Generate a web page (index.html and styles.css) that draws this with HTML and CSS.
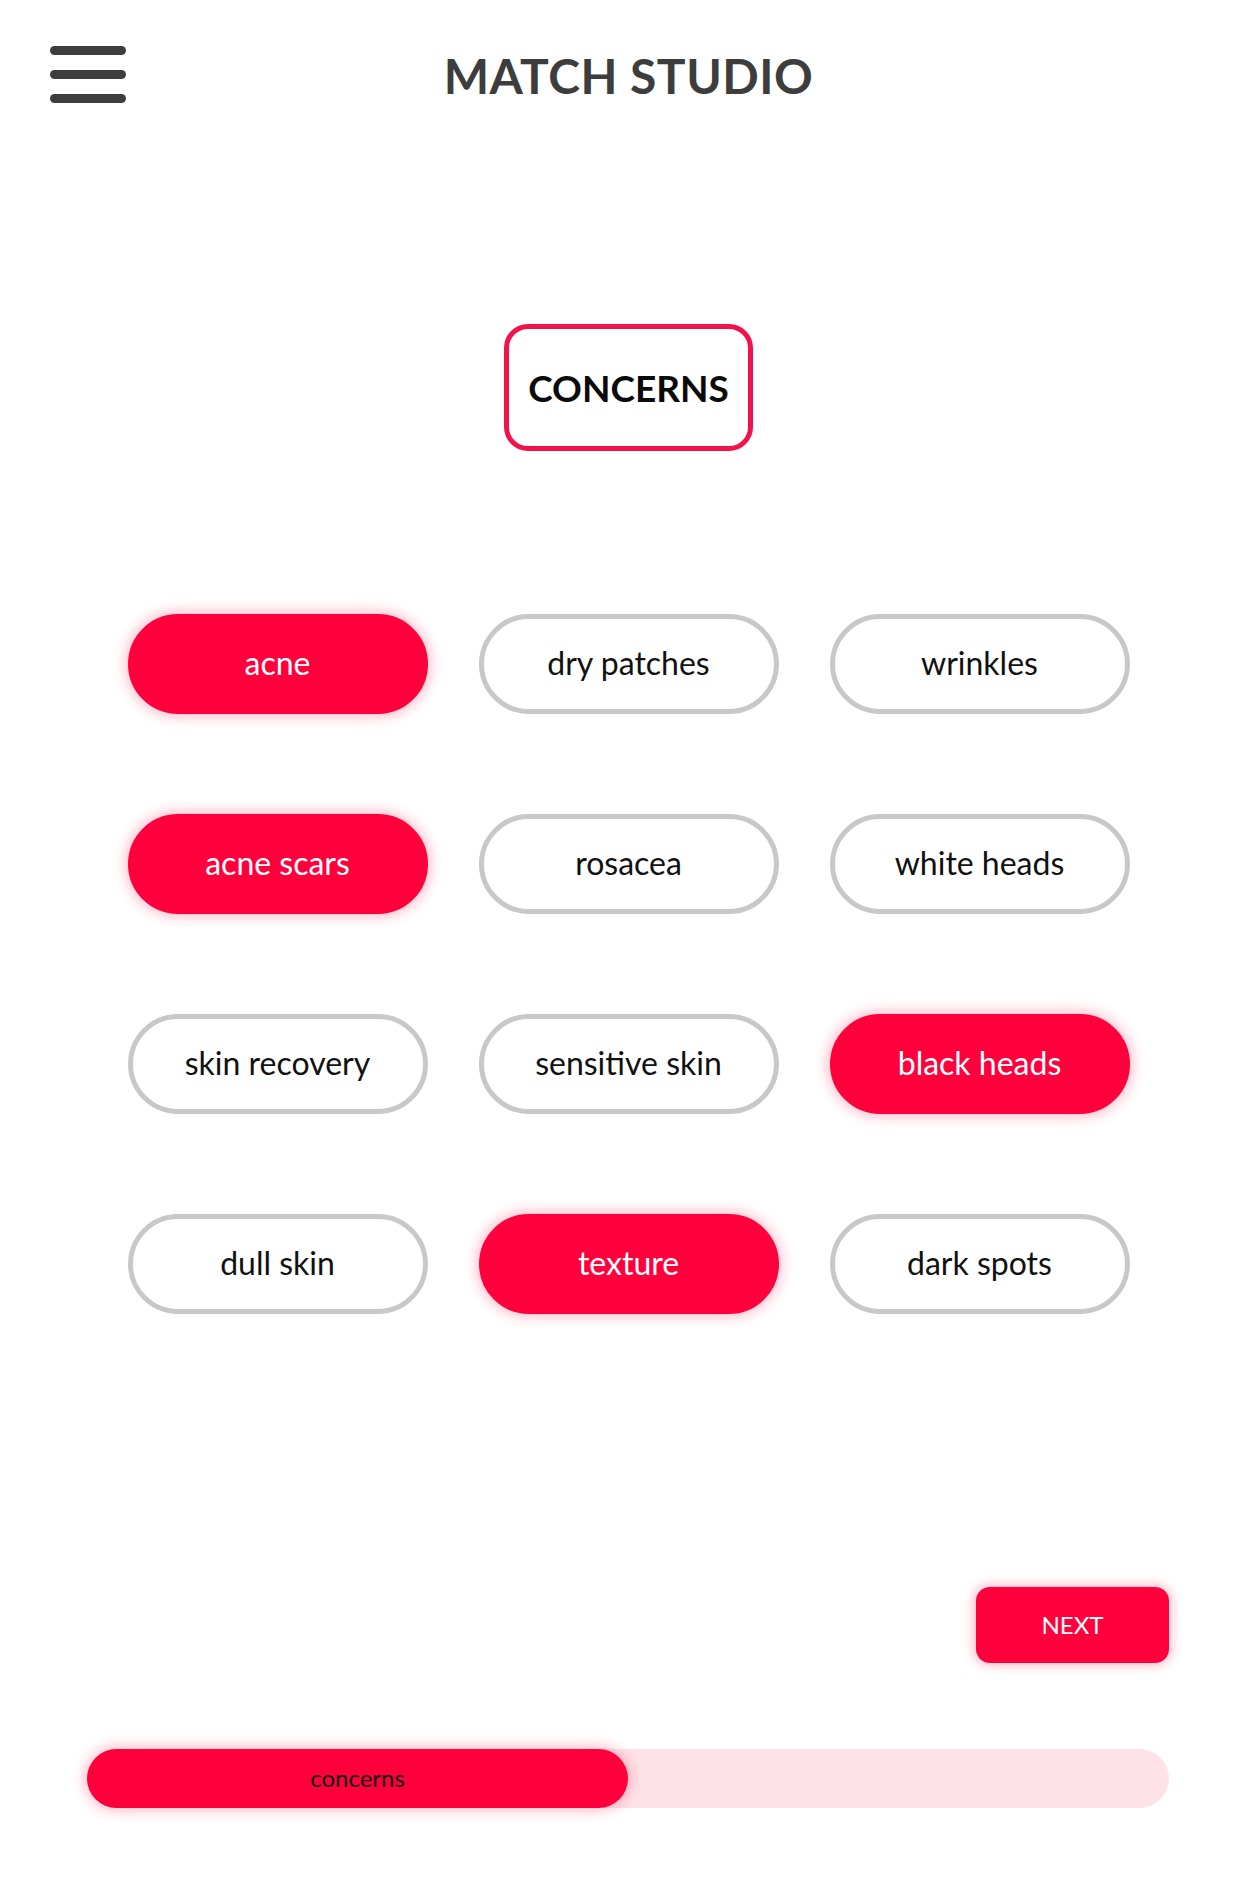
FILE: index.html
```html
<!DOCTYPE html>
<html lang="en">
<head>
<meta charset="utf-8">
<title>Match Studio - Concerns</title>
<link rel="stylesheet" href="styles.css">
</head>
<body>
<div class="page">
  <header class="topbar">
    <button class="menu" aria-label="Menu">
      <span class="bar"></span><span class="bar"></span><span class="bar"></span>
    </button>
    <h1 class="brand">MATCH STUDIO</h1>
    <div class="spacer"></div>
  </header>

  <div class="step-wrap">
    <div class="step-title">CONCERNS</div>
  </div>

  <div class="pills">
    <button class="pill on">acne</button>
    <button class="pill">dry patches</button>
    <button class="pill">wrinkles</button>
    <button class="pill on">acne scars</button>
    <button class="pill">rosacea</button>
    <button class="pill">white heads</button>
    <button class="pill">skin recovery</button>
    <button class="pill">sensitive skin</button>
    <button class="pill on">black heads</button>
    <button class="pill">dull skin</button>
    <button class="pill on">texture</button>
    <button class="pill">dark spots</button>
  </div>

  <div class="footer">
    <div class="next-row">
      <button class="next">NEXT</button>
    </div>
    <div class="progress">
      <div class="fill" style="width:50%">concerns</div>
    </div>
  </div>
</div>
</body>
</html>
```

FILE: styles.css
```css
* { box-sizing: border-box; }
html, body { margin: 0; padding: 0; background: #ffffff; }
body { font-family: Lato, "Noto Sans", sans-serif; color: #000; }

.page { width: 1257px; height: 1885px; }

.topbar {
  display: grid;
  grid-template-columns: 1fr auto 1fr;
  align-items: start;
  height: 130px;
}
.menu {
  justify-self: start;
  margin: 46px 0 0 50px;
  padding: 0;
  border: 0;
  background: none;
  display: flex;
  flex-direction: column;
  gap: 15px;
  width: 76px;
}
.bar {
  display: block;
  height: 9px;
  width: 76px;
  border-radius: 5px;
  background: #3d3d3d;
}
.brand {
  margin: 47px 0 0 0;
  font-size: 48px;
  line-height: 1.2;
  font-weight: 700;
  color: #3d3d3d;
  letter-spacing: 0.5px;
}

.step-wrap {
  display: flex;
  justify-content: center;
  margin-top: 194px;
}
.step-title {
  width: 249px;
  height: 127px;
  border: 5px solid #f2134a;
  border-radius: 24px;
  display: flex;
  align-items: center;
  justify-content: center;
  font-size: 37px;
  font-weight: 700;
  color: #0a0a0a;
}

.pills {
  display: grid;
  grid-template-columns: repeat(3, 300px);
  grid-auto-rows: 100px;
  column-gap: 51px;
  row-gap: 100px;
  justify-content: center;
  margin-top: 163px;
}
.pill {
  font-family: Lato, "Noto Sans", sans-serif;
  font-size: 32px;
  color: #111;
  background: #fff;
  border: 5px solid #c8c8c8;
  border-radius: 50px;
  padding: 0 0 3px 0;
}
.pill.on {
  background: #ff003c;
  border-color: #ff003c;
  color: #fff;
  box-shadow: 0 0 14px 2px rgba(255, 0, 60, 0.3);
}

.footer {
  margin: 273px 88px 0 87px;
}
.next-row {
  display: flex;
  justify-content: flex-end;
}
.next {
  width: 193px;
  height: 76px;
  border: 0;
  border-radius: 14px;
  background: #ff003c;
  color: #fff;
  font-family: Lato, "Noto Sans", sans-serif;
  font-size: 24px;
  padding: 0 0 2px 0;
  box-shadow: 0 0 12px 2px rgba(255, 0, 60, 0.3);
}
.progress {
  margin-top: 86px;
  height: 59px;
  border-radius: 30px;
  background: #fde3e8;
}
.fill {
  height: 100%;
  border-radius: 30px;
  background: #ff003c;
  display: flex;
  align-items: center;
  justify-content: center;
  font-size: 24px;
  padding-bottom: 3px;
  color: #111;
  box-shadow: 0 0 14px 2px rgba(255, 0, 60, 0.3);
}
```
